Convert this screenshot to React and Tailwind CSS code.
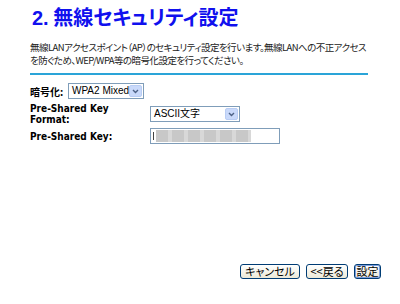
import React from 'react';

const jp = "font-['MS_UI_Gothic','Noto_Sans_CJK_JP',sans-serif] [font-feature-settings:'palt']";
const ui = "font-['Liberation_Sans','Noto_Sans_CJK_JP',sans-serif]";
const label = "font-['DejaVu_Sans_Condensed','DejaVu_Sans',sans-serif] text-[10px] font-bold text-black";

// XP-style select box with a little blue arrow button
function Select({ value, className }) {
  return (
    <div className={`flex items-center h-[16px] border border-[#7f9db9] bg-white ${className}`}>
      <span className={`flex-1 pl-[3px] whitespace-nowrap text-[10px] leading-none text-black ${ui}`}>{value}</span>
      <span className="flex items-center justify-center w-[13px] h-[12px] mr-[1px] rounded-[2px] border border-[#b9cdf4] bg-[#c9d9fa]">
        <svg width="7" height="5" viewBox="0 0 7 5">
          <path d="M1 1 L3.5 3.5 L6 1" fill="none" stroke="#4d6185" strokeWidth="1.4" />
        </svg>
      </span>
    </div>
  );
}

function Button({ children, focused, className }) {
  return (
    <button
      className={`h-[15px] rounded-[3px] border border-[#003c74] bg-gradient-to-b from-white to-[#ece9d8] text-[11px] leading-none whitespace-nowrap text-black ${jp} ${
        focused ? 'shadow-[inset_0_0_0_1px_#7b9de0]' : ''
      } ${className}`}
    >
      {children}
    </button>
  );
}

export default function App() {
  return (
    <div className="w-[400px] h-[304px] bg-white flex flex-col pl-[30px] pr-[19px]">
      <h1 className={`mt-[4px] ml-[2px] text-[20px] leading-[26px] font-bold text-[#1010ee] ${jp}`}>
        <span className="font-['Liberation_Sans',sans-serif]">2.</span> 無線セキュリティ設定
      </h1>

      <p className={`mt-[10px] whitespace-nowrap text-[9.5px] leading-[13px] tracking-[-0.55px] text-[#222] ${jp}`}>
        無線LANアクセスポイント（AP）のセキュリティ設定を行います。無線LANへの不正アクセス
        <br />
        を防ぐため、WEP/WPA等の暗号化設定を行ってください。
      </p>

      <div className="mt-[6px] w-[338px] h-[2px] bg-[#2aa4d8]" />

      <div className="mt-[8px] flex items-center">
        <span className={`w-[38px] text-[10px] font-bold text-black ${jp}`}>暗号化:</span>
        <Select value="WPA2 Mixed" className="w-[76px]" />
      </div>

      <div className="mt-[4px] flex items-center">
        <span className={`w-[120px] leading-[11px] ${label}`}>
          Pre-Shared Key
          <br />
          Format:
        </span>
        <Select value="ASCII文字" className="w-[90px]" />
      </div>

      <div className="mt-[3px] flex items-center">
        <span className={`w-[120px] ${label}`}>Pre-Shared Key:</span>
        <div className="flex items-center w-[130px] h-[16px] border border-[#7f9db9] bg-white pl-[2px]">
          <span className="w-[1px] h-[8px] bg-[#444]" />
          <span className="ml-[2px] w-[95px] h-[12px] bg-[repeating-linear-gradient(90deg,#c8c8c8_0,#c8c8c8_12px,#d8d8d8_12px,#d8d8d8_16px)]" />
        </div>
      </div>

      <div className="mt-auto mb-[25px] flex justify-end gap-[6px]">
        <Button className="w-[60px]">キャンセル</Button>
        <Button className="w-[42px]">&lt;&lt;戻る</Button>
        <Button focused className="w-[27px]">設定</Button>
      </div>
    </div>
  );
}
